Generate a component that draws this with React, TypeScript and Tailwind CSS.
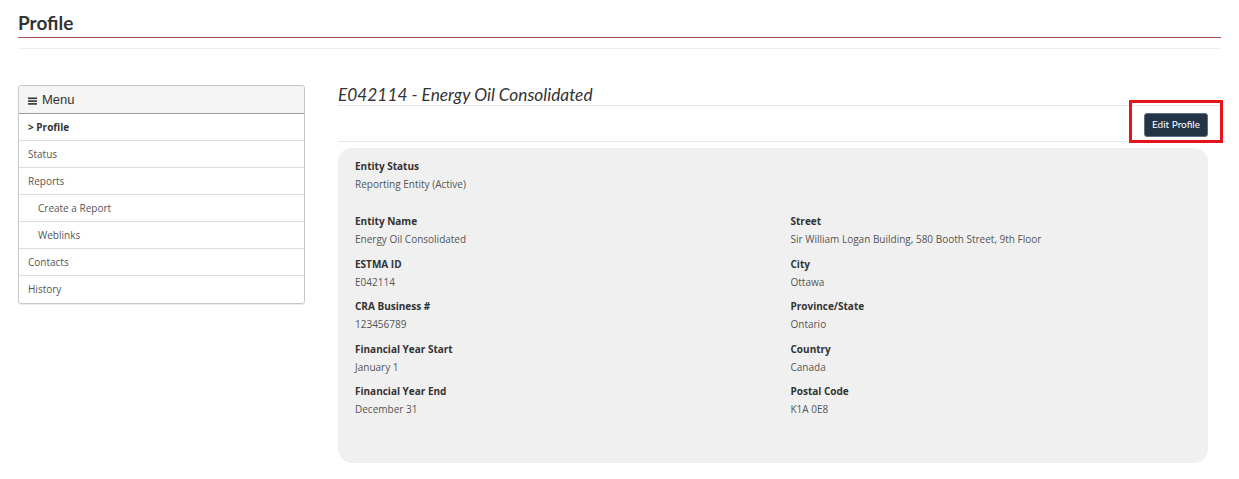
import React from "react";

const menu: { label: string; sub?: boolean; active?: boolean }[] = [
  { label: "> Profile", active: true },
  { label: "Status" },
  { label: "Reports" },
  { label: "Create a Report", sub: true },
  { label: "Weblinks", sub: true },
  { label: "Contacts" },
  { label: "History" },
];

const left = [
  ["Entity Name", "Energy Oil Consolidated"],
  ["ESTMA ID", "E042114"],
  ["CRA Business #", "123456789"],
  ["Financial Year Start", "January 1"],
  ["Financial Year End", "December 31"],
];
const right = [
  ["Street", "Sir William Logan Building, 580 Booth Street, 9th Floor"],
  ["City", "Ottawa"],
  ["Province/State", "Ontario"],
  ["Country", "Canada"],
  ["Postal Code", "K1A 0E8"],
];

function Field({ label, value }: { label: string; value: string }) {
  return (
    <div className="h-[42.6px]">
      <div className="text-[10px] leading-[18px] font-bold text-[#333]">{label}</div>
      <div className="text-[10px] leading-[18px] text-[#555]">{value}</div>
    </div>
  );
}

export default function App() {
  return (
    <div className="w-[1239px] h-[479px] bg-white px-[18px] overflow-hidden" style={{ fontFamily: '"Open Sans", sans-serif' }}>
      <div className="pt-[11px]">
        <h1 className="text-[19px] leading-[24px] font-bold text-[#333] pb-[2px] border-b border-[#a6504f]" style={{ fontFamily: 'Lato, sans-serif' }}>
          Profile
        </h1>
        <div className="mt-[10px] border-b border-[#eeeeee]" />
      </div>
      <div className="flex items-start mt-[36px] gap-[33px]">
        <div className="w-[287px] shrink-0 border border-[#c8c8c8] rounded-[3px] shadow-[0_1px_1px_rgba(0,0,0,0.08)]">
          <div className="h-[28px] bg-[#f5f5f5] border-b border-[#9a9a9a] flex items-center pl-[9px] gap-[5px] text-[13px] text-[#333] rounded-t-[3px]" style={{ fontFamily: '"Liberation Sans", Arial, sans-serif' }}>
            <svg width="9" height="8" viewBox="0 0 9 8" className="mt-[2px]">
              <rect x="0" y="0.5" width="9" height="1.6" fill="#333" />
              <rect x="0" y="3.3" width="9" height="1.6" fill="#333" />
              <rect x="0" y="6.1" width="9" height="1.6" fill="#333" />
            </svg>
            <span>Menu</span>
          </div>
          {menu.map((m, i) => (
            <div
              key={m.label}
              className={
                "h-[27px] flex items-center text-[10px] " +
                (i < menu.length - 1 ? "border-b border-[#dddddd] " : "") +
                (m.sub ? "pl-[19px] " : "pl-[9px] ") +
                (m.active ? "font-bold text-[#333]" : "text-[#555]")
              }
            >
              {m.label}
            </div>
          ))}
        </div>
        <div className="flex-1">
          <h2 className="text-[17.3px] leading-[20px] italic text-[#333] pb-[0px] border-b border-[#e8e8e8]" style={{ fontFamily: 'Lato, sans-serif' }}>
            E042114 - Energy Oil Consolidated
          </h2>
          <div className="h-[36px] border-b border-[#e8e8e8] flex items-center justify-end pr-[13px]">
            <div className="relative">
              <button
                className="h-[24px] px-[7px] bg-[#243447] border border-[#5b6f88] rounded-[3px] text-white text-[10px] mt-[1px]"
                style={{ fontFamily: 'Lato, sans-serif' }}
              >
                Edit Profile
              </button>
              <div className="absolute left-[-15px] right-[-15px] top-[-10px] bottom-[-6px] border-[3px] border-[#e8141c] pointer-events-none" />
            </div>
          </div>
          <div className="mt-[6px] mr-[13px] h-[315px] bg-[#f0f0f0] rounded-[14px] pl-[17px] pt-[9px]">
            <div className="h-[55px]">
              <Field label="Entity Status" value="Reporting Entity (Active)" />
            </div>
            <div className="grid grid-cols-2">
              <div>
                {left.map(([l, v]) => (
                  <Field key={l} label={l} value={v} />
                ))}
              </div>
              <div className="pl-[9px]">
                {right.map(([l, v]) => (
                  <Field key={l} label={l} value={v} />
                ))}
              </div>
            </div>
          </div>
        </div>
      </div>
    </div>
  );
}
